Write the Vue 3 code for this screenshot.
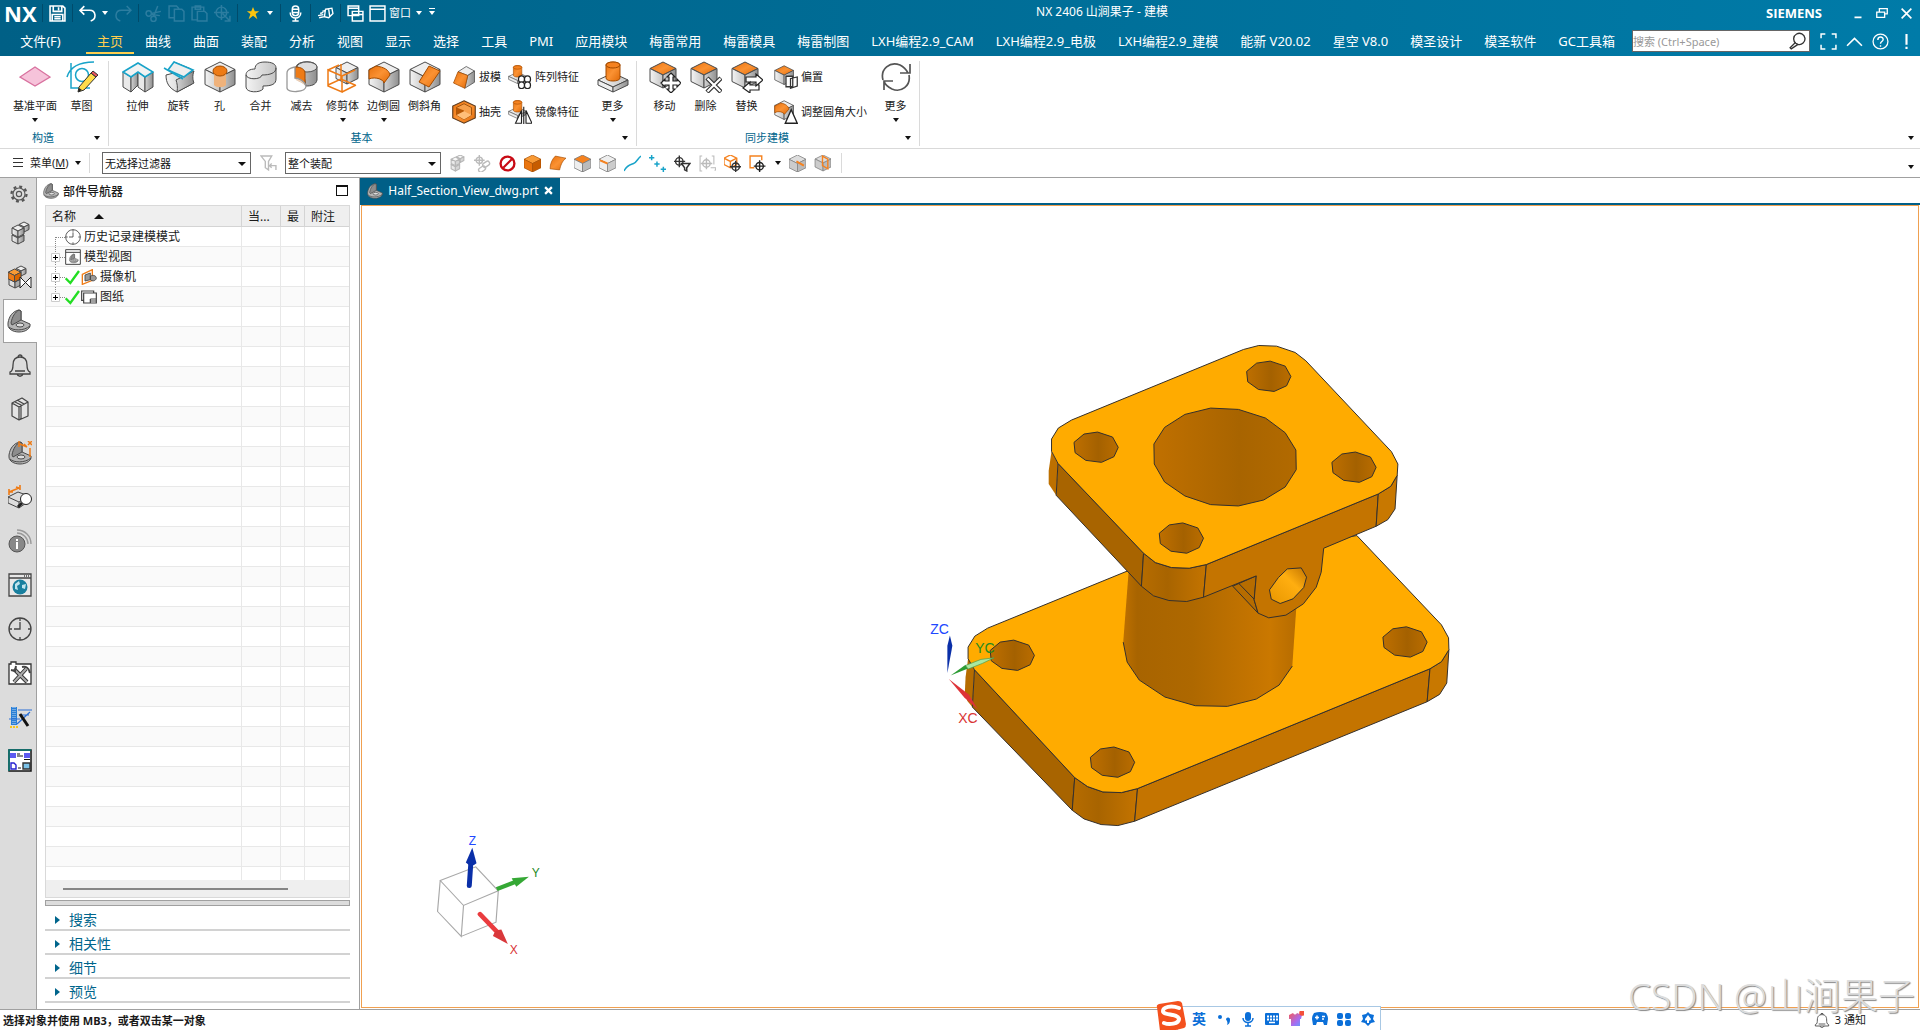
<script setup>
import { h, ref } from 'vue'

const G = 'url(#steel)'
const D = 'url(#steelDark)'
const O = 'url(#amber)'
const K = 'stroke="#4a4a4a" stroke-linejoin="round"'

// Isometric block with top, left and right faces
const block = (x, y, w, top, left, right, k = K) => {
  const m = x + w / 2, a = w / 4, b = w
  return `<g ${k}><path fill="${top}" d="M${m} ${y}L${x + w} ${y + a}L${m} ${y + 2 * a}L${x} ${y + a}Z"/>
  <path fill="${left}" d="M${x} ${y + a}L${m} ${y + 2 * a}V${y + b}L${x} ${y + b - a}Z"/>
  <path fill="${right}" d="M${x + w} ${y + a}L${m} ${y + 2 * a}V${y + b}L${x + w} ${y + b - a}Z"/></g>`
}
const boss = `<g ${K}><path fill="${G}" d="M1 19L16 12L31 19L16 26Z"/><path fill="#eee" d="M1 19L16 26V31L1 24Z"/><path fill="${D}" d="M31 19L16 26V31L31 24Z"/></g>
  <path fill="${O}" stroke="#a34b00" d="M9 4C9 0 23 0 23 4V17C23 21 9 21 9 17Z"/><ellipse cx="16" cy="4" rx="7" ry="3" fill="#f58220" stroke="#a34b00"/>`
const bossSmall = `<g transform="scale(.800)">${boss}</g>`
const target = (x, y, c) => `<g fill="none" stroke="${c}" stroke-width="1.300"><circle cx="${x}" cy="${y}" r="3.500"/><path d="M${x - 5.5} ${y}h11M${x} ${y - 5.5}v11"/></g>`
const bracket = `<g ${K}><path fill="#b5b5b5" d="M1 14C2 7 6 2 12 1L14 2V11L23 15C24 19 19 23 12 23C6 23 1 20 1 16Z"/><path fill="#8d8d8d" d="M12 1L14 2V11L5 16L4 14C5 8 8 3 12 1Z"/><ellipse cx="13" cy="16" rx="4" ry="2" fill="#ddd"/><path fill="none" d="M2 18C6 22 17 22 23 17"/></g>`
const bell = '<path fill="none" stroke="#444" stroke-width="1.300" d="M2 19C5 18 5 15 5 12C5 6 8 4 12 4C16 4 19 6 19 12C19 15 19 18 22 19V21H2ZM10 4a2 2 0 1 1 4 0M9 21C10 24 14 24 15 21M7 18h10"/>'
const clock = '<g fill="none" stroke="#444" stroke-width="1.300"><circle cx="12" cy="12" r="11"/><path d="M12 5V12H6M12 1v3M12 20v3M1 12h3M20 12h3"/></g>'

const icons = {
  plane: '<path fill="#f6c3da" stroke="#d8719e" stroke-width="1.300" d="M16 6L31 16L16 25L1 16Z"/>',
  sketch: '<g fill="none" stroke="#18a3c9" stroke-width="1.500"><path d="M5 2V27H24M1 16C4 6 14 1 28 1"/><circle cx="16" cy="14" r="6.500"/></g><path fill="#ffdc4a" stroke="#333" d="M13 26L25 12L30 16L18 29L12 31Z"/><path fill="#e9545d" stroke="#333" d="M25 12L27 10L32 14L30 16Z"/><path fill="#222" d="M13 27L16 29L12 31Z"/>',
  extrude: `<g ${K}><path fill="#e9e9e9" d="M1 11L9 16V31L1 26Z"/><path fill="${D}" d="M9 16L16 11V24L9 31Z"/><path fill="#e9e9e9" d="M16 11L23 16V31L16 26Z"/><path fill="${D}" d="M23 16L31 11V26L23 31Z"/></g><path fill="#f2f2f2" stroke="#18a3c9" stroke-width="1.600" d="M1 11L16 2L31 11L23 16L16 11L9 16Z"/>`,
  revolve: `<path fill="${G}" ${K} d="M11 1L28 8C26 13 27 18 29 23L14 31C6 27 3 22 3 14L11 12Z"/><path fill="${D}" ${K} d="M31 10C29 15 30 20 31 22L14 31C15 26 14 22 13 19Z"/><path fill="#eee" stroke="#18a3c9" stroke-width="1.600" d="M11 1L30 9L21 16L5 9Z"/><path stroke="#18a3c9" stroke-width="1.500" d="M1 7L20 18"/>`,
  hole: block(1, 1, 30, '#eee', G, D) + '<path fill="#efb27b" d="M10 11V24C12 27 20 27 22 24V11Z"/><ellipse cx="16" cy="10" rx="7" ry="5" fill="#ee7b16" stroke="#a34b00"/>',
  unite: `<path fill="${G}" ${K} d="M1 14C1 10 5 8 10 8C10 3 14 1 20 1C27 1 31 3 31 7V18C31 23 27 25 18 25V28C15 32 1 32 1 26Z"/><path fill="none" ${K} d="M1 14C2 19 16 19 17 14C25 14 31 12 31 7"/>`,
  subtract: `<path fill="${D}" ${K} d="M10 6C11 -1 31 -1 31 6V19C30 24 25 25 20 25L17 10Z"/><ellipse cx="21" cy="6" rx="10" ry="5" fill="#ddd" stroke="#555"/><path fill="#ee7b16" stroke="#a34b00" d="M9 6C16 6 19 9 19 12V24C15 20 10 20 9 17Z"/><path fill="#fff" fill-opacity=".7" stroke="#999" stroke-width="1.300" d="M1 12C1 7 9 6 9 6V17C12 17 19 20 20 25C20 32 1 32 1 27Z"/>`,
  trim: block(9, 1, 22, '#eee', G, D) + '<path fill="none" stroke="#ee7b16" stroke-width="1.500" d="M1 9L12 4M1 9V25L15 31V15ZM15 15L28 9M15 31L29 24M1 24L14 18L28 24M14 3V18"/>',
  blend: block(1, 1, 30, '#eee', G, D) + '<path fill="url(#amber)" stroke="#a34b00" d="M1 9L8 5C16 6 21 9 22 14L16 22C16 19 8 15 1 18Z"/>',
  chamfer: block(1, 1, 30, '#eee', G, D) + '<path fill="url(#amber)" stroke="#a34b00" d="M20 5L31 10L20 26L10 21Z"/>',
  draft: `<g ${K}><path fill="#eee" d="M8 9L19 2L30 8L21 14Z"/><path fill="${D}" d="M21 14L30 8V23L17 31Z"/></g><path fill="url(#amber)" stroke="#a34b00" d="M8 9L21 14L17 31L2 24Z"/>`,
  shell: `<path fill="${O}" stroke="#5a3b20" stroke-width="1.500" d="M16 1L31 8V24L16 31L1 24V8Z"/><path fill="#f7a04b" stroke="#8a4100" d="M16 5L26 10V20L16 26L6 20V10Z"/><path fill="#b75806" d="M6 10L16 14V26L6 20Z"/><path fill="#ffbf7a" d="M6 20L16 15L26 20L16 26Z"/>`,
  pattern: bossSmall + '<g fill="#fff" stroke="#222" stroke-width="1.700"><ellipse cx="18" cy="19" rx="4" ry="4.500"/><ellipse cx="26" cy="19" rx="4" ry="4.500"/><ellipse cx="18" cy="27" rx="4" ry="4.500"/><ellipse cx="26" cy="27" rx="4" ry="4.500"/></g>',
  mirror: bossSmall + '<path fill="#fff" stroke="#222" stroke-width="1.500" d="M18 14V31H10ZM24 14V31H32Z"/><path stroke="#222" stroke-width="1.500" d="M21 9V32"/>',
  boss,
  move: block(1, 1, 26, O, G, D) + '<path fill="#fff" stroke="#222" stroke-width="1.200" d="M22 12L26 16H24V20H28V18L32 22L28 26V24H24V28H26L22 32L18 28H20V24H16V26L12 22L16 18V20H20V16H18Z"/>',
  erase: block(1, 1, 26, O, G, D) + '<path stroke="#333" stroke-width="4.500" d="M17 17L31 31M31 17L17 31"/><path stroke="#fff" stroke-width="2.200" d="M17.500 17.500L30.500 30.500M30.500 17.500L17.500 30.500"/>',
  replace: block(1, 1, 26, O, G, D) + '<path fill="#fff" stroke="#222" stroke-width="1.200" d="M15 16H25V13L32 19L25 25V21H15ZM28 24H19V21L12 27L19 32V29H28Z"/>',
  offset: block(1, 1, 25, O, G, D) + '<path fill="#fff" stroke="#333" stroke-width="1.700" d="M16 15H25V29H16ZM22 18L31 16V28L22 31Z"/>',
  resize: block(1, 1, 25, '#eee', G, D) + '<path fill="url(#amber)" stroke="#a34b00" d="M1 8L9 4C15 5 19 8 20 12L14 19C12 16 6 14 1 17Z"/><path fill="#fff" stroke="#222" stroke-width="1.800" d="M23 13L31 31H15Z"/>',
  refresh: '<path fill="none" stroke="#555" stroke-width="1.700" d="M3 19C0 8 10 0 20 4C24 6 26 8 28 12M30 3V12H20M29 14C31 25 21 32 12 28C8 26 5 24 4 20M4 29V20H13"/>',

  save: '<path fill="none" stroke="#fff" stroke-width="1.500" d="M1 1H13L15 3V15H1ZM4 1V6H12V1M9 2V5M3 15V9H13V15M5 11H11M5 13H11"/>',
  undo: '<path fill="none" stroke="#fff" stroke-width="1.500" d="M5 1L1 5L5 9M1 5H10C16 5 17 13 11 15"/>',
  redo: '<path fill="none" stroke="#2c7da0" stroke-width="1.400" d="M11 1L15 5L11 9M15 5H6C0 5 -1 13 5 15"/>',
  cut: '<g fill="none" stroke="#2c7da0" stroke-width="1.400"><circle cx="3.500" cy="8" r="2.500"/><circle cx="8" cy="13" r="2.500"/><path d="M6 8L15 6M8 11L12 1M6 9L14 10"/></g>',
  copy: '<path fill="none" stroke="#2c7da0" stroke-width="1.400" d="M6 12H1V1H8L10 3V4M6 4H13L15 6V15H6Z"/>',
  paste: '<path fill="none" stroke="#2c7da0" stroke-width="1.400" d="M6 14H1V2H12V6M4 1H9V4H4ZM6 6H13L15 8V15H6Z"/>',
  repeat: '<g fill="none" stroke="#2c7da0" stroke-width="1.400"><circle cx="7" cy="7" r="5"/><path d="M7 0V14M0 7H14M8 8L15 15M15 10V15H10"/></g>',
  star: '<path fill="#fcc40e" d="M8 1L10 6H15L11 9L13 15L8 11L3 15L5 9L1 6H6Z"/>',
  mic: '<g fill="none" stroke="#fff" stroke-width="1.400"><rect x="5" y="1" width="6" height="9" rx="3"/><path d="M3 7C3 14 13 14 13 7M8 12V15M5 15H11M5 4H11M5 7H11"/></g>',
  touch: '<path fill="none" stroke="#fff" stroke-width="1.300" d="M8 4L14 3L15 8L11 12L7 11ZM7 11L2 12M6 9L1 10M6 7L3 8M8 5L5 6M11 4L12 11"/>',
  windows: '<path fill="#00658c" stroke="#fff" stroke-width="1.400" d="M1 1H11V10H1ZM1 3H11M5 6H15V15H5ZM5 9H15"/>',
  window: '<path fill="none" stroke="#fff" stroke-width="1.400" d="M1 1H15V15H1ZM1 4H15"/>',
  full: '<path fill="none" stroke="#fff" stroke-width="1.400" d="M1 5V1H5M11 1H15V5M15 11V15H11M5 15H1V11"/>',
  up: '<path fill="none" stroke="#fff" stroke-width="1.500" d="M1 12L8 5L15 12"/>',
  help: '<circle cx="8" cy="8" r="7" fill="none" stroke="#fff" stroke-width="1.200"/><path fill="none" stroke="#fff" stroke-width="1.300" d="M5.500 6.500C5.500 3 10.500 3 10.500 6C10.500 8 8 8 8 10M8 11.500V13"/>',
  bang: '<path fill="#fff" d="M7 1H9V11H7ZM7 13H9V15H7Z"/>',
  search: '<path fill="none" stroke="#333" stroke-width="1.200" d="M6 10A5 5 0 1 1 8 11ZM6 9L1 14L2 15L8 11"/>',
  min: '<path stroke="#fff" stroke-width="2" d="M4 13H12"/>',
  restore: '<path fill="none" stroke="#fff" stroke-width="1.500" d="M2 7H11V13H2ZM5 7V3H14V9H11"/>',
  close: '<path stroke="#fff" stroke-width="2" d="M2 2L14 14M14 2L2 14"/>',
  shut: '<path stroke="#fff" stroke-width="4" d="M2 2L14 14M14 2L2 14"/>',

  asm: `<g opacity=".4">${block(7, 0, 7, '#eee', '#ccc', '#999')}${block(2, 7, 8, '#ddd', '#ccc', '#999')}${block(2, 2, 8, '#eee', '#ccc', '#999')}</g>`,
  link: '<g fill="none" stroke="#bbb" stroke-width="1.300"><circle cx="5" cy="5" r="3"/><path d="M5 0V10M0 5H10"/><rect x="8" y="7" width="7" height="4" rx="2" transform="rotate(-35 11 9)"/><rect x="4" y="11" width="7" height="4" rx="2" transform="rotate(-35 8 13)"/></g>',
  none: '<circle cx="8" cy="8" r="6.500" fill="none" stroke="#c80a14" stroke-width="2.200"/><path stroke="#c80a14" stroke-width="2" d="M12 4L4 12"/>',
  body: block(0, 0, 16, '#f89a35', '#ea750f', '#c75c00', 'stroke="#a34b00" stroke-width=".600"'),
  face: '<path fill="url(#amber)" stroke="#a34b00" stroke-width=".600" d="M6 1L16 3C12 6 11 10 10 14L1 13C1 8 3 4 6 1Z"/>',
  top: block(0, 0, 16, '#f5821f', '#eee', '#bbb', 'stroke="#777" stroke-width=".700"'),
  edge: block(0, 0, 16, '#eee', '#eee', '#ccc', 'stroke="#888" stroke-width=".800"') + '<path stroke="#f5821f" stroke-width="1.800" d="M1 5L8 8"/>',
  curve: '<path fill="none" stroke="#18a3c9" stroke-width="1.400" d="M0 15C3 9 6 9 9 8S13 3 16 1"/>',
  points: '<path stroke="#18a3c9" stroke-width="1.400" d="M0 2.500H5M2.500 0V5M5 8.500H10M7.500 6V11M11 13.500H16M13.500 11V16"/>',
  pfilter: target(5, 6, '#333') + '<path fill="#fff" stroke="#333" stroke-width="1.400" d="M7 8H15L12 12V15L10 14V12Z"/>',
  region: '<path fill="none" stroke="#bbb" d="M3 1H1V15H3M12 1H14V9M11 12H16L15 15"/>' + target(7, 8, '#bbb'),
  boxsel: '<path fill="none" stroke="#f5821f" stroke-width="1.300" d="M6 0L12 3V9L6 12L0 9V3ZM0 3L6 6L12 3M6 6V12"/>' + target(11, 11, '#333'),
  rect: '<path fill="none" stroke="#f5821f" stroke-width="1.300" d="M12 5V1H1V12H5"/>' + target(10, 10.5, '#222'),
  section: block(0, 0, 16, '#ddd', '#ccc', '#bbb', 'stroke="#888" stroke-width=".800"') + '<path stroke="#f5821f" stroke-width="1.800" d="M7 6L14 10"/>',
  clip: block(1, 0, 15, '#ddd', '#ccc', '#bbb', 'stroke="#888" stroke-width=".800"') + '<path fill="none" stroke="#f5821f" stroke-width="1.300" d="M8 1V10L13 13V4Z"/>',
  funnel: '<path fill="none" stroke="#bbb" stroke-width="1.300" d="M1 1H11L8 6V14L5 12V6ZM15 14V10H9M11 8L9 10L11 12"/>',

  gear: '<g fill="none" stroke="#555" stroke-width="1.500"><circle cx="12" cy="12" r="3.500"/><circle cx="12" cy="12" r="8"/></g><circle cx="12" cy="12" r="10" fill="none" stroke="#555" stroke-width="3" stroke-dasharray="3.900 3.950"/>',
  assembly: block(11, 1, 10, '#eee', G, D) + block(4, 11, 12, '#ddd', G, D) + block(4, 4, 12, '#eee', G, D),
  constraint: block(8, 1, 10, '#eee', G, D) + block(1, 11, 12, '#ddd', '#ddd', '#aaa') + block(0, 4, 13, '#f89a35', '#ee7b16', '#d96500') + '<path fill="#fff" stroke="#222" d="M12 12L23 23V12L12 23Z"/>',
  bracket, bell, clock,
  books: '<path fill="#e4e4e4" stroke="#444" stroke-width="1.200" stroke-linejoin="round" d="M4 6L14 1L20 5V19L11 23L4 19ZM4 6L11 10L20 5M11 10V23M7 5L13 8V22M9 3L16 7"/>',
  measure: bracket + '<path fill="none" stroke="#ee7b16" stroke-width="1.500" d="M11 0V6M12 3L19 6M16 3L19 6M22 7V16M20 0L24 4M24 0L20 4"/>',
  inspect: '<path fill="#ddd" stroke="#444" d="M0 12L10 7L21 11V16L11 23L0 18ZM0 12L11 17L21 11M11 17V23"/><path fill="none" stroke="#ee7b16" stroke-width="1.600" d="M1 10V4M12 5V0M1 7L11 3M1 7L5 7M11 3L8 2"/><circle cx="18" cy="14" r="5.500" fill="#fff" stroke="#222"/><path stroke="#222" stroke-width="3" d="M14 18L10 22"/>',
  info: '<circle cx="9" cy="15" r="8" fill="#888" stroke="#555"/><path fill="#fff" d="M8 10H10V12H8ZM8 13H10V20H8Z"/><path fill="none" stroke="#999" stroke-width="1.400" d="M9 1C17 1 23 7 23 15M9 4C15 4 20 9 20 15"/>',
  web: '<path fill="#e8e8e8" stroke="#444" stroke-width="1.300" d="M1 1H23V23H1ZM1 5H23M16 3h1M18 3h1M20 3h1"/><circle cx="12" cy="14" r="7.500" fill="#187f9e"/><path fill="#bfe4ee" d="M7 11L11 8L12 11L9 13L10 17L7 16ZM14 12L18 11L17 16L14 15Z"/>',
  tools: '<path fill="#fff" stroke="#333" stroke-width="1.300" d="M1 23V3H3V1H8V3H23V23Z"/><path stroke="#333" stroke-width="4" d="M6 8L19 21M18 8L6 21"/><path stroke="#aaa" stroke-width="2" d="M6 8L19 21M18 8L6 21"/><path fill="none" stroke="#444" stroke-width="2" d="M3 9L7 10L8 5M14 6C18 5 21 7 22 12"/>',
  wand: '<rect x="3" y="2" width="6" height="18" fill="#2a7fd6"/><path stroke="#fff" stroke-width=".700" stroke-dasharray="1 1" d="M5 2V20M7 2V20"/><path stroke="#2a6fd6" stroke-width="1.200" d="M10 5H24M12 10H21M1 14H12M9 19L22 7"/><path stroke="#111" stroke-width="3" d="M12 9L20 21"/><path stroke="#f6c520" stroke-width="2" stroke-dasharray="2 1" d="M2 22H11"/>',
  flow: '<path fill="#fff" stroke="#111" stroke-width="1.500" d="M1 1H23V22H1Z"/><path fill="none" stroke="#087b78" stroke-width="1.500" d="M1 22V1H23"/><path fill="#5d5bf0" d="M2 4H8V9H2ZM16 4H22V9H16Z"/><path stroke="#111" d="M9 5H12M9 7H15M10 19H13M16 10.500H22"/><path fill="#fff" stroke="#2420d0" stroke-width="1.400" d="M3 14H6L8 16V20H3Z"/><path fill="#7cc2e8" stroke="#333" stroke-width="1.400" d="M15 14H22V20H15Z"/>',
  views: '<path fill="#fff" stroke="#444" stroke-width="1.500" d="M1 1H23V23H1ZM1 5H23"/><g transform="translate(6 7) scale(.600)">' + bracket + '</g>',
  check: '<path fill="none" stroke="#22dd22" stroke-width="3.500" d="M1 14L8 21L21 3"/>',
  camera: '<path fill="none" stroke="#ee7b16" stroke-width="2" d="M2 8L17 1V17L2 23Z"/><path fill="#999" stroke="#444" stroke-width="1.300" d="M6 9L14 6V16L6 18ZM14 11C18 8 23 10 23 14C22 18 17 19 14 16Z"/>',
  sheet: '<path fill="#fff" stroke="#444" stroke-width="1.800" d="M4 17H1V3H19V6M4 6H23V21H4ZM14 15H23M14 15V21M14 18H23"/>'
}

const Icon = (p) => h('svg', {
  width: p.size, height: p.size, viewBox: `0 0 ${p.box || 16} ${p.box || 16}`,
  'aria-hidden': 'true', innerHTML: icons[p.name]
})
Icon.props = ['name', 'size', 'box']

const tabs = ['主页', '曲线', '曲面', '装配', '分析', '视图', '显示', '选择', '工具', 'PMI', '应用模块', '梅雷常用', '梅雷模具', '梅雷制图', 'LXH编程2.9_CAM', 'LXH编程2.9_电极', 'LXH编程2.9_建模', '能新 V20.02', '星空 V8.0', '模圣设计', '模圣软件', 'GC工具箱']
const groups = [
  { name: '构造', cls: 'datum', items: [{ icon: 'plane', text: '基准平面', more: true, wide: true }, { icon: 'sketch', text: '草图' }] },
  {
    name: '基本', cls: 'basic', items: [
      { icon: 'extrude', text: '拉伸' }, { icon: 'revolve', text: '旋转' }, { icon: 'hole', text: '孔' }, { icon: 'unite', text: '合并' },
      { icon: 'subtract', text: '减去' }, { icon: 'trim', text: '修剪体', more: true }, { icon: 'blend', text: '边倒圆', more: true }, { icon: 'chamfer', text: '倒斜角' },
      { stack: [{ icon: 'draft', text: '拔模' }, { icon: 'shell', text: '抽壳' }] },
      { stack: [{ icon: 'pattern', text: '阵列特征' }, { icon: 'mirror', text: '镜像特征' }] },
      { icon: 'boss', text: '更多', more: true, last: true }]
  },
  {
    name: '同步建模', cls: 'sync', items: [
      { icon: 'move', text: '移动' }, { icon: 'erase', text: '删除' }, { icon: 'replace', text: '替换' },
      { stack: [{ icon: 'offset', text: '偏置' }, { icon: 'resize', text: '调整圆角大小' }] },
      { icon: 'refresh', text: '更多', more: true, last: true }]
  }
]
const filters = ['asm', 'link', 'none', 'body', 'face', 'top', 'edge', 'curve', 'points', 'pfilter', 'region', 'boxsel', 'rect']
const resources = ['assembly', 'constraint', 'bracket', 'bell', 'books', 'measure', 'inspect', 'info', 'web', 'clock', 'tools', 'wand', 'flow']
const tree = [
  { text: '历史记录建模模式', icon: 'clock' },
  { text: '模型视图', icon: 'views', open: true },
  { text: '摄像机', icon: 'camera', open: true, check: true },
  { text: '图纸', icon: 'sheet', open: true, check: true }
]
const sections = ['搜索', '相关性', '细节', '预览']
const filter = ref('无选择过滤器')
const scope = ref('整个装配')

const hole = '-62,-14 -34,-39 4,-45 46,-30 62,1 50,29 15,46 -29,40 -59,17'
const topHoles = [[1033, 166], [549, 379], [1272, 439], [788, 652]]
const baseHoles = [[314, 224], [1415, 184], [595, 545]]
</script>

<template>
  <div class="app">
    <svg class="defs" width="0" height="0" aria-hidden="true">
      <defs>
        <linearGradient id="steel"><stop offset="0" stop-color="#f4f4f4" /><stop offset="1" stop-color="#c4c4c4" /></linearGradient>
        <linearGradient id="steelDark"><stop offset="0" stop-color="#d4d4d4" /><stop offset="1" stop-color="#8e8e8e" /></linearGradient>
        <linearGradient id="amber" x2="1" y2="1"><stop offset="0" stop-color="#e8700c" /><stop offset=".5" stop-color="#fb9233" /><stop offset="1" stop-color="#e06a08" /></linearGradient>
      </defs>
    </svg>

    <header class="header">
      <div class="titlebar">
        <div class="quick">
          <strong class="logo">NX</strong><i class="bar"></i>
          <button aria-label="保存"><Icon name="save" size="17" /></button><i class="bar"></i>
          <button aria-label="撤销"><Icon name="undo" size="17" /></button><span class="tri light"></span>
          <button aria-label="重做"><Icon name="redo" size="17" /></button><i class="bar"></i>
          <button aria-label="剪切"><Icon name="cut" size="17" /></button>
          <button aria-label="复制"><Icon name="copy" size="17" /></button>
          <button aria-label="粘贴"><Icon name="paste" size="17" /></button>
          <button aria-label="重复"><Icon name="repeat" size="17" /></button><i class="bar"></i>
          <button aria-label="收藏"><Icon name="star" size="14" /></button><span class="tri light"></span><i class="bar"></i>
          <button aria-label="语音"><Icon name="mic" size="17" /></button><i class="bar"></i>
          <button aria-label="触控"><Icon name="touch" size="17" /></button><i class="bar"></i>
          <button aria-label="切换窗口"><Icon name="windows" size="17" /></button>
          <button class="win"><Icon name="window" size="17" />窗口</button><span class="tri light"></span>
          <span class="tri light over"></span>
        </div>
        <div class="title">NX 2406 山涧果子 - 建模</div>
        <div class="wincontrols">
          <strong>SIEMENS</strong>
          <button aria-label="最小化"><Icon name="min" size="14" /></button>
          <button aria-label="还原"><Icon name="restore" size="14" /></button>
          <button aria-label="关闭"><Icon name="close" size="13" /></button>
        </div>
      </div>
      <nav class="tabs">
        <button class="file">文件(F)</button>
        <button v-for="(t, i) in tabs" :key="t" :class="{ on: i === 0 }">{{ t }}</button>
        <label class="search"><input type="text" placeholder="搜索 (Ctrl+Space)" aria-label="搜索"><Icon name="search" size="18" /></label>
        <div class="tools">
          <button aria-label="全屏"><Icon name="full" size="17" /></button>
          <button aria-label="折叠"><Icon name="up" size="17" /></button>
          <button aria-label="帮助"><Icon name="help" size="17" /></button>
          <button aria-label="提示"><Icon name="bang" size="17" /></button>
        </div>
      </nav>
    </header>

    <section class="ribbon">
      <div v-for="g in groups" :key="g.name" class="group" :class="g.cls">
        <div class="items">
          <template v-for="(it, n) in g.items" :key="n">
            <div v-if="it.stack" class="stack">
              <button v-for="s in it.stack" :key="s.text"><Icon :name="s.icon" size="24" box="32" />{{ s.text }}</button>
            </div>
            <button v-else class="big" :class="{ wide: it.wide, last: it.last }">
              <Icon :name="it.icon" size="32" box="32" /><span>{{ it.text }}</span><i v-if="it.more" class="tri"></i>
            </button>
          </template>
        </div>
        <div class="caption"><span>{{ g.name }}</span><i class="tri"></i></div>
      </div>
      <i class="tri end"></i>
    </section>

    <section class="selbar">
      <button class="menu"><i class="lines"></i><span>菜单(<u>M</u>)</span><i class="tri"></i></button>
      <label class="pick"><select v-model="filter" aria-label="过滤器"><option>无选择过滤器</option></select></label>
      <button class="funnel" aria-label="重置过滤器"><Icon name="funnel" size="17" /></button>
      <label class="pick scope"><select v-model="scope" aria-label="范围"><option>整个装配</option></select></label>
      <div class="filters">
        <button v-for="f in filters" :key="f" :aria-label="f"><Icon :name="f" size="17" /></button>
        <i class="tri"></i>
        <button aria-label="section"><Icon name="section" size="17" /></button>
        <button aria-label="clip"><Icon name="clip" size="17" /></button>
      </div>
      <i class="tri end"></i>
    </section>

    <main class="work">
      <nav class="resource">
        <button class="cog" aria-label="设置"><Icon name="gear" size="18" box="24" /></button>
        <button v-for="r in resources" :key="r" :class="{ on: r === 'bracket' }" :aria-label="r"><Icon :name="r" size="24" box="24" /></button>
      </nav>

      <aside class="navigator">
        <h2><Icon name="bracket" size="16" box="24" />部件导航器<button class="float" aria-label="浮动"></button></h2>
        <div class="grid">
          <div class="rows">
            <table>
              <colgroup><col class="c1"><col class="c2"><col class="c3"><col></colgroup>
              <thead><tr><th>名称<i class="sort"></i></th><th>当...</th><th>最</th><th>附注</th></tr></thead>
              <tbody>
                <tr v-for="(r, i) in tree" :key="r.text">
                  <td>
                    <div class="node">
                      <svg width="19" height="19" viewBox="0 0 19 19" aria-hidden="true">
                        <path :d="i === 0 ? 'M9.500 10V19M10 10.500H19' : i === 3 ? 'M9.500 0V7M14 10.500H19' : 'M9.500 0V7M9.500 15V19M14 10.500H19'" fill="none" stroke="#888" stroke-dasharray="1 1" />
                        <path v-if="r.open" d="M5.500 6.500H13.500V14.500H5.500Z" fill="#fff" stroke="#ccc" />
                        <path v-if="r.open" d="M7 10.500H12M9.500 8V13" stroke="#000" />
                      </svg>
                      <Icon v-if="r.check" name="check" size="16" box="24" /><Icon :name="r.icon" size="16" box="24" /><span>{{ r.text }}</span>
                    </div>
                  </td><td></td><td></td><td></td>
                </tr>
                <tr v-for="n in 60" :key="n"><td></td><td></td><td></td><td></td></tr>
              </tbody>
            </table>
          </div>
          <div class="hscroll"><i></i></div>
        </div>
        <div class="splitter"></div>
        <button v-for="s in sections" :key="s" class="section"><i></i>{{ s }}</button>
      </aside>

      <section class="canvas">
        <div class="doctabs"><button><Icon name="bracket" size="16" box="24" />Half_Section_View_dwg.prt<Icon name="shut" size="9" /></button></div>
        <div class="view">
          <svg viewBox="362 205 1556 802" role="img" aria-label="Half_Section_View_dwg">
            <defs>
              <linearGradient id="bore"><stop offset="0" stop-color="#c07000" /><stop offset=".6" stop-color="#a86400" /><stop offset="1" stop-color="#b26a00" /></linearGradient>
              <linearGradient id="smallbore"><stop offset="0" stop-color="#be6f00" /><stop offset=".55" stop-color="#a46100" /><stop offset="1" stop-color="#ba6d00" /></linearGradient>
              <linearGradient id="pipe"><stop offset="0" stop-color="#bd7000" /><stop offset=".08" stop-color="#a86400" /><stop offset=".4" stop-color="#ae6800" /><stop offset=".75" stop-color="#c47400" /><stop offset=".85" stop-color="#ca7800" /><stop offset="1" stop-color="#b66c00" /></linearGradient>
              <linearGradient id="round"><stop offset="0" stop-color="#b66c00" /><stop offset=".4" stop-color="#a86400" /><stop offset="1" stop-color="#c47400" /></linearGradient>
              <linearGradient id="eye" x1="0" y1="1" x2="1" y2="0"><stop offset="0" stop-color="#e89600" /><stop offset=".6" stop-color="#ffae10" /><stop offset="1" stop-color="#c27400" /></linearGradient>
            </defs>
            <g class="solid" transform="translate(900 580) scale(.35714 .33333)">
              <polygon class="bare" points="190,235 208,268 202,380 188,362 181,335 183,290" fill="#b66c00" />
              <polygon points="208,268 489,592 482,690 202,380" fill="#a86400" />
              <polygon points="489,592 525,619 568,635 620,637 665,625 657,723 610,736 563,733 515,716 482,690" fill="url(#round)" />
              <polygon points="665,625 1485,265 1477,364 657,723" fill="#c47400" />
              <polygon points="1485,265 1517,244 1538,208 1532,308 1512,342 1477,364" fill="#c87800" />
              <polygon points="190,200 209,167 245,143 633,-27 1280,-135 1517,133 1537,172 1538,208 1517,244 1485,265 665,625 620,637 568,635 525,619 489,592 208,268 190,235" fill="#ffab00" />
              <polygon v-for="p in baseHoles" :key="p[0]" :points="hole" :transform="`translate(${p[0]} ${p[1]})`" fill="url(#smallbore)" />
              <polygon class="bare" points="640,-25 625,185 636,245 670,299 742,350 827,376 917,378 998,356 1062,314 1099,257 1110,85 1000,-60" fill="url(#pipe)" />
              <polyline points="625,185 636,245 670,299 742,350 827,376 917,378 998,356 1062,314 1099,257" fill="none" />
            </g>
            <g class="solid" transform="translate(900 320) scale(.35714 .33333)">
              <polygon points="932,797 998,766 992,838 1003,878" fill="#b66c00" />
              <polyline points="950,790 992,836" fill="none" />
              <polygon class="bare" points="424,392 442,428 437,524 416,490 416,450" fill="#bd7000" />
              <polygon points="442,428 682,698 676,797 437,524" fill="#a86400" />
              <polygon points="682,698 715,726 760,741 810,743 858,732 850,830 803,843 753,840 710,826 676,797" fill="url(#round)" />
              <polygon points="858,732 1340,520 1334,617 1187,683 1180,755 1166,800 1130,850 1081,884 1033,892 1003,878 992,838 998,766 850,830" fill="#c47400" />
              <polygon points="1340,520 1375,497 1393,464 1387,565 1367,597 1334,617" fill="#c87800" />
              <polygon points="424,355 424,392 442,428 682,698 715,726 760,741 810,743 858,732 1340,520 1375,497 1393,464 1395,430 1377,393 1137,120 1107,95 1055,76 1005,74 962,86 480,298 443,322" fill="#ffab00" />
              <polygon points="711,370 741,320 798,281 870,262 948,266 1024,292 1079,336 1109,388 1110,447 1079,499 1019,538 948,556 870,552 798,526 741,484 712,430" fill="url(#bore)" />
              <polygon v-for="p in topHoles" :key="p[0]" :points="hole" :transform="`translate(${p[0]} ${p[1]})`" fill="url(#smallbore)" />
              <polygon points="1035,808 1060,771 1085,745 1124,742 1139,770 1131,801 1101,835 1065,849 1040,836" fill="url(#eye)" />
            </g>
            <g transform="translate(900 580) scale(.35714 .33333)">
              <path fill="#0a2fa8" d="M132 278L132 196L139 165L146 196Z" />
              <path fill="#2c9c34" d="M141 285L183 253L190 264Z" /><path fill="#a9e8a0" stroke="#4c9a4c" stroke-width="2" d="M183 255L226 237L263 232L230 249L190 266Z" />
              <path fill="#de3338" d="M136 296L192 342L217 387L180 352Z" />
            </g>
            <g class="axis">
              <text x="930" y="634" fill="#2148ff">ZC</text><text x="975" y="653" fill="#1f8a1f">YC</text><text x="958" y="723" fill="#d93636">XC</text>
            </g>
            <g transform="translate(0 800) scale(.3827 .33333)">
              <path fill="none" stroke="#a8a8a8" stroke-width="3" d="M1148 241L1241 200L1300 272L1209 316ZM1148 241L1141 334L1203 409L1209 316M1203 409L1294 366L1300 272" />
              <path stroke="#0a2fa8" stroke-width="13" stroke-linecap="round" d="M1224 257L1228 190" /><path fill="#0a2fa8" d="M1232 143L1215 187Q1229 204 1243 189Z" />
              <path stroke="#35a835" stroke-width="12" d="M1296 267L1345 245" /><path fill="#35a835" d="M1380 230L1335 234L1347 260Z" />
              <path stroke="#ea3c3f" stroke-width="13" stroke-linecap="round" d="M1252 342L1298 397" /><path fill="#d9383b" d="M1325 432L1286 408Q1290 388 1308 388Z" />
            </g>
            <g class="axis small">
              <text x="468" y="845" fill="#2148ff">Z</text><text x="531" y="877" fill="#1f8a1f">Y</text><text x="509" y="954" fill="#d93636">X</text>
            </g>
          </svg>
        </div>
      </section>
    </main>

    <footer class="status">
      <strong>选择对象并使用 MB3，或者双击某一对象</strong>
      <button><Icon name="bell" size="16" box="24" />3 通知</button>
    </footer>

    <div class="ime">
      <svg width="33" height="30" viewBox="0 0 33 30" aria-hidden="true"><path fill="#f4511e" d="M3 6Q2 4 5 3L24 0Q27 0 28 2L32 23Q32 26 30 27L10 32Q7 33 6 30Z" /><path fill="none" stroke="#fff" stroke-width="4" stroke-linecap="round" d="M25 7C17 4 9 6 9 10C9 15 24 12 25 18C25 23 15 24 10 22" /></svg>
      <b>英</b>
      <svg viewBox="0 0 16 16"><circle cx="4" cy="6" r="2" /><path d="M10 8a2 2 0 1 1 4 1q0 4-3 5q1-2 0-4q-1-1-1-2" /></svg>
      <svg viewBox="0 0 16 16"><rect x="5" y="1" width="6" height="9" rx="3" /><path fill="none" stroke="#0b6fd8" stroke-width="1.500" d="M3 7C3 13 13 13 13 7M8 12V15M5 15H11" /></svg>
      <svg viewBox="0 0 16 16"><rect x="1" y="2" width="14" height="12" rx="1" /><path stroke="#fff" stroke-width="2" stroke-dasharray="2 1" d="M3 5.500H14M3 8.500H14" /><path stroke="#fff" stroke-width="1.500" d="M5 11.500H11" /></svg>
      <svg viewBox="0 0 16 16"><defs><linearGradient id="shirt" x2="1" y2="1"><stop offset="0" stop-color="#f45a5a" /><stop offset=".6" stop-color="#a86cf0" /><stop offset="1" stop-color="#5aa0ff" /></linearGradient></defs><path fill="url(#shirt)" d="M1 4L5 2Q7 5 9 2L14 4L13 8H12V15H3V8H1Z" /><circle cx="14" cy="2" r="2.800" fill="#f4503c" /></svg>
      <svg viewBox="0 0 16 16"><path d="M2 2Q8 0 14 2Q16 5 16 8L15 14H12L11 11H5L4 14H1L0 8Q0 5 2 2" /><path stroke="#fff" stroke-width="1.500" d="M3 6.500H7M5 4.500V8.500M10 5.500H13M10 8H12" /></svg>
      <svg viewBox="0 0 16 16"><rect x="1" y="2" width="6" height="6" rx="2" /><rect x="9" y="2" width="6" height="6" rx="2" /><rect x="1" y="9" width="6" height="6" rx="2" /><rect x="9" y="9" width="6" height="6" rx="2" /></svg>
      <svg viewBox="0 0 16 16"><path d="M8 1L10 3L14 4L13 8L15 11L11 12L8 15L5 12L1 11L3 8L2 4L6 3Z" /><path fill="#fff" d="M8 4L11 8Q10 11 9 9V12H7V9Q5 11 5 8Z" /></svg>
    </div>
    <div class="watermark">CSDN @山涧果子</div>
  </div>
</template>

<style>
html, body { margin: 0; background: #fff; }
.app, .app button, .app input, .app select { font-family: "Noto Sans", "Noto Sans CJK SC", sans-serif; font-size: 11px; }
.app svg { display: block; flex: none; }
</style>

<style scoped>
.app { position: relative; display: flex; flex-direction: column; height: 100vh; overflow: hidden; color: #1a1a1a; }
.app * { box-sizing: border-box; }
.defs { position: absolute; }
button { display: flex; align-items: center; justify-content: center; padding: 0; border: 0; background: none; color: inherit; line-height: 14px; white-space: nowrap; }
.tri { flex: none; width: 0; height: 0; border: 3px solid transparent; border-top: 4px solid #111; border-bottom: 0; }
.tri.light { border-top-color: #fff; margin: 0 4px 0 3px; }

.header { flex: none; height: 56px; background: linear-gradient(90deg, #006086, #007ba8); color: #fff; }
.titlebar { display: flex; height: 26px; align-items: center; }
.quick { display: flex; align-items: center; width: 438px; padding-left: 4px; }
.quick button { width: 23px; height: 24px; }
.quick .bar { width: 1px; height: 18px; margin: 0 3px; background: #004b6b; }
.quick .logo { width: 35px; font: bold 22px "Open Sans", sans-serif; line-height: 24px; }
.quick .win { width: 46px; gap: 3px; }
.quick .over { position: relative; margin: 0 0 0 3px; }
.over::before { content: ""; position: absolute; left: -3px; top: -7px; width: 6px; height: 1px; background: #fff; }
.title { flex: 1; text-align: center; font-size: 12px; line-height: 24px; padding-bottom: 2px; }
.wincontrols { display: flex; align-items: center; width: 154px; }
.wincontrols strong { width: 80px; font: bold 13px "Open Sans", sans-serif; }
.wincontrols button { width: 24px; height: 24px; }
.tabs { display: flex; height: 30px; align-items: center; }
.tabs > button { height: 26px; padding: 0 11px; font-size: 13px; border: solid transparent; border-width: 2px 0; }
.tabs > .file { width: 86px; padding: 0 5px 0 0; }
.tabs > .on { color: #ffce4e; border-bottom-color: #ffce4e; }
.search { display: flex; flex: 1; align-items: center; min-width: 0; height: 22px; margin-left: 6px; padding-right: 2px; background: #fff; border: 1px solid #666; }
.search input { flex: 1; min-width: 0; padding: 0; border: 0; outline: 0; background: none; }
.search input::placeholder { color: #999; }
.tools { display: flex; flex: none; gap: 8px; margin: 0 5px 0 9px; }
.tools button { width: 18px; height: 22px; }

.ribbon { display: flex; flex: none; height: 93px; padding-top: 5px; border-bottom: 1px solid #d9d9d9; background: #fff; }
.group { display: flex; flex-direction: column; height: 85px; border-right: 1px solid #dadada; }
.items { display: flex; height: 71px; }
.datum { width: 109px; }
.datum .items { padding-left: 9px; }
.basic { width: 528px; }
.basic .items { padding-left: 8px; }
.sync { width: 283px; }
.sync .items { padding-left: 7px; }
.big { flex-direction: column; justify-content: flex-start; flex: none; width: 41px; }
.big.wide { width: 52px; }
.big.last { margin-left: auto; margin-right: 3px; }
.big span { margin-top: 6px; }
.big .tri { margin-top: 5px; }
.stack { display: flex; flex-direction: column; gap: 11px; padding-top: 4px; margin-left: 7px; }
.stack button { justify-content: flex-start; gap: 3px; height: 24px; }
.caption { display: flex; align-items: center; height: 16px; color: #00658c; line-height: 16px; }
.caption span { flex: 1; text-align: center; }
.caption .tri { margin: 0 8px; }
.tri.end { margin: auto 6px 8px auto; }

.selbar { display: flex; flex: none; align-items: center; height: 29px; border-bottom: 1px solid #a0a0a0; background: #fff; }
.menu { justify-content: flex-start; width: 90px; height: 20px; padding-left: 13px; border-right: 1px solid #dadada; }
.menu .lines { width: 10px; height: 10px; margin-right: 7px; background: repeating-linear-gradient(#333 0 1px, transparent 1px 4px); }
.menu .tri { margin-left: 6px; }
.pick { position: relative; width: 149px; height: 22px; margin-left: 12px; }
.pick::after { content: ""; position: absolute; right: 5px; top: 10px; border: 4px solid transparent; border-top-color: #111; border-bottom: 0; pointer-events: none; }
.pick select { appearance: none; width: 100%; height: 22px; padding: 0 2px; border: 1px solid #666; border-radius: 0; background: #fff; color: #111; }
.pick.scope { width: 156px; margin-left: 0; }
.funnel { width: 34px; }
.filters { display: flex; align-items: center; height: 20px; padding-right: 6px; margin-left: 4px; border-right: 1px solid #dadada; }
.filters button { width: 25px; }
.filters .tri { margin: 0 4px 0 5px; }

.work { display: flex; flex: 1; min-height: 0; }
.resource { flex: none; width: 37px; background: #dcdcdc; border-right: 1px solid #a0a0a0; }
.resource button { width: 37px; height: 44px; padding-right: 1px; padding-left: 3px; }
.resource .cog { height: 33px; padding: 0 0 2px; }
.resource .on { width: 34px; margin-left: 3px; padding: 0 3px 0 0; border: 1px solid #a0a0a0; border-right: 0; background: #fff; position: relative; }
.resource .on::after { content: ""; position: absolute; right: -1px; top: 0; width: 1px; height: 42px; background: #fff; }
.navigator { display: flex; flex: none; flex-direction: column; width: 322px; padding: 0 9px 6px 8px; background: #fff; }
.navigator h2 { display: flex; align-items: center; gap: 4px; flex: none; height: 27px; margin: 0 0 0 -2px; padding-bottom: 2px; font-size: 12px; font-weight: 500; }
.navigator .float { width: 12px; height: 11px; margin: 0 2px 0 auto; border: 1px solid #111; border-top-width: 2px; }
.grid { display: flex; flex: 1; flex-direction: column; min-height: 0; border: 1px solid #d9d9d9; }
.rows { flex: 1; min-height: 0; overflow: hidden; }
table { width: 100%; table-layout: fixed; border-spacing: 0; font-size: 12px; }
.c1 { width: 196px; } .c2 { width: 39px; } .c3 { width: 24px; }
th { height: 21px; padding: 1px 0 0 6px; text-align: left; font-weight: 400; line-height: 19px; background: #efefef; border: solid #d4d4d4; border-width: 0 1px 1px 0; white-space: nowrap; }
td { height: 20px; padding: 0; line-height: 19px; border: solid #e8e8e8; border-width: 0 1px 1px 0; }
th:last-child, td:last-child { border-right: 0; }
tbody tr:nth-child(even) { background: #fafafa; }
.sort { display: inline-block; margin: 0 0 2px 18px; border: 5px solid transparent; border-bottom: 5px solid #111; border-top: 0; }
.node { display: flex; align-items: center; height: 19px; white-space: nowrap; }
.node span { margin-left: 3px; }
.hscroll { flex: none; height: 17px; padding: 8px 61px 0 17px; background: #efefef; }
.hscroll i { display: block; height: 2px; background: #868686; }
.splitter { flex: none; height: 6px; margin: 2px 0 1px; background: #dcdcdc; border: 1px solid #a0a0a0; }
.section { justify-content: flex-start; flex: none; height: 24px; padding: 4px 0 0 10px; gap: 9px; border-bottom: 2px solid #d2d2d2; color: #00658c; font-size: 14px !important; }
.section i { border: 4px solid transparent; border-left: 5px solid #00658c; border-right: 0; }

.canvas { display: flex; flex: 1; flex-direction: column; min-width: 0; border-left: 1px solid #a0a0a0; background: #fff; }
.doctabs { flex: none; height: 27px; border-bottom: 2px solid #005f87; }
.doctabs button { width: 200px; height: 25px; gap: 5px; background: #005f87; color: #fff; font-size: 12px; }
.view { flex: 1; min-height: 0; margin: 0 1px 1px 1px; border: 1px solid #f0a050; }
.view svg { width: 100%; height: 100%; }
.solid polygon, .solid polyline { stroke: #35302c; stroke-width: 1; vector-effect: non-scaling-stroke; stroke-linejoin: round; }
.solid .bare { stroke: none; }
.axis text { font: 14px "Liberation Sans", sans-serif; }
.axis.small text { font-size: 12px; }

.status { display: flex; flex: none; align-items: center; justify-content: space-between; height: 21px; padding: 0 54px 0 3px; border-top: 1px solid #a0a0a0; background: #fff; }
.status button { gap: 5px; }
.ime { position: absolute; right: 539px; bottom: 0; display: flex; align-items: center; gap: 8px; height: 24px; padding: 0 4px 0 0; border: 1px solid #a8c8e4; border-bottom: 0; background: #fff; color: #0b6fd8; }
.ime svg { width: 16px; height: 16px; fill: #0b6fd8; }
.ime svg:first-child { width: 33px; height: 30px; margin: -6px -3px 0 -24px; }
.ime b { width: 16px; font-size: 14px; line-height: 20px; }
.watermark { position: absolute; right: 5px; bottom: 10px; color: #dcdcdc; font-size: 37px; font-weight: 300; line-height: 48px; text-shadow: 1px 1px 1px #888; pointer-events: none; }
</style>
